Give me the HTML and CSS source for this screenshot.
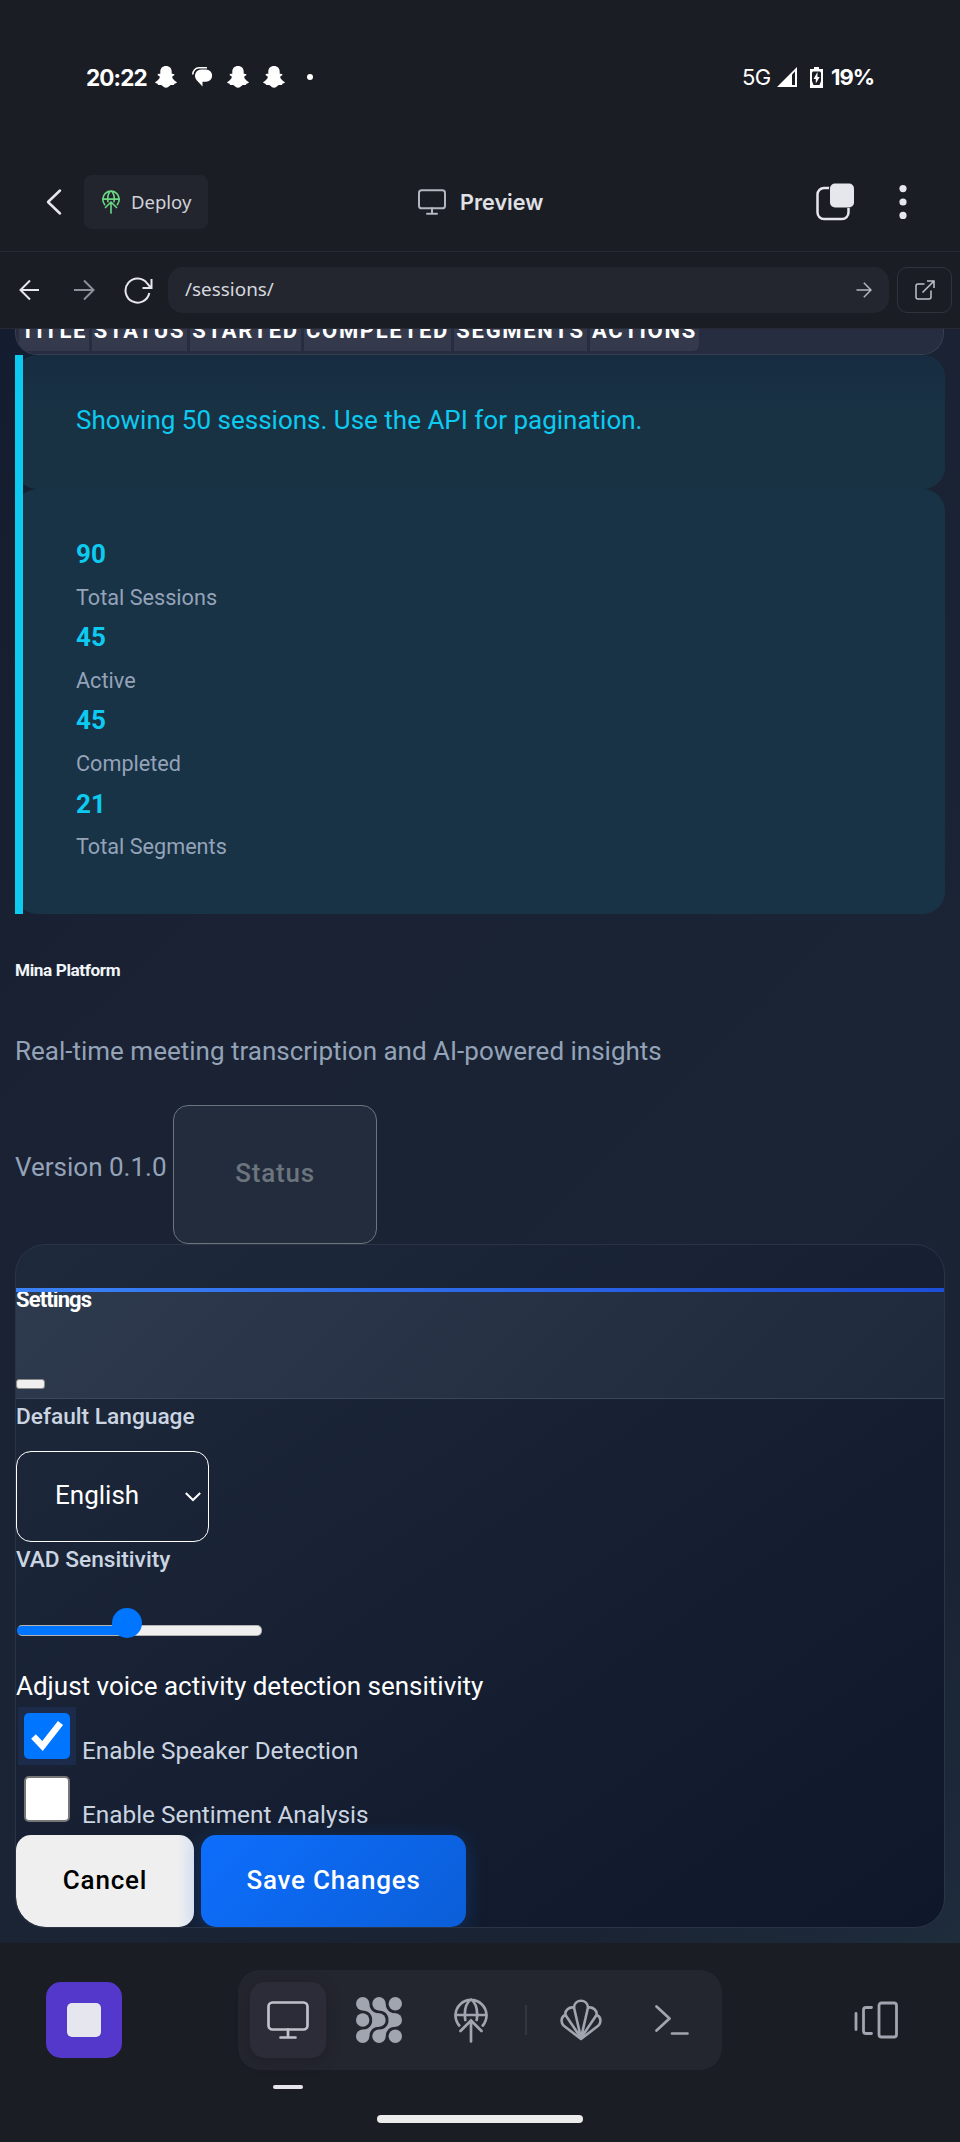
FILE: index.html
```html
<!DOCTYPE html>
<html lang="en">
<head>
<meta charset="utf-8">
<title>Preview</title>
<link rel="stylesheet" href="styles.css">
</head>
<body>
<svg width="0" height="0" class="defs">
  <defs>
    <symbol id="ghost" viewBox="0 0 22 22"><path d="M11 0C7.400 0 5.300 2.400 5.300 5.800v2C4.200 8 3 7.800 2.600 8.500c-.3.9 1.800 1.400 2.200 2.200.3 1.400-2.100 4-4.500 5.200-.8.700.7 1.600 2.200 1.900.5.300.2 1 .9 1.200 1.200.1 2.400-.4 3.600.4 1.200.9 2.300 2.300 4 2.300s2.800-1.400 4-2.300c1.200-.8 2.400-.3 3.600-.4.7-.2.4-.9.9-1.200 1.500-.3 3-1.200 2.200-1.900-2.400-1.200-4.800-3.800-4.500-5.200.4-.8 2.500-1.300 2.200-2.200-.4-.7-1.600-.5-2.700-.7v-2C16.700 2.400 14.600 0 11 0z" fill="#fff"/></symbol>
    <symbol id="monitor" viewBox="0 0 42 38"><g fill="none" stroke="currentColor" stroke-linecap="round"><rect x="1.500" y="1.500" width="39" height="27" rx="4"/><path d="M21 28.500V36M13.500 36.500h15"/></g></symbol>
    <symbol id="globe" viewBox="0 0 34 45"><g fill="none" stroke="currentColor" stroke-linecap="round"><path d="M5.200 27.500a15.500 15.500 0 1 1 23.600 0M1.500 17h31M11.300 22C10 13 12 5 17 1.500 22 5 24 13 22.700 22"/><path d="M17 43.500V23M6.500 33 17 22.500 27.500 33"/></g></symbol>
  </defs>
</svg>
<div class="screen">
  <div class="status-bar">
    <span class="clock">20:22</span>
    <svg class="ghost g1" width="22" height="22"><use href="#ghost"/></svg>
    <svg class="chat" width="20" height="20" viewBox="0 0 20 20"><path d="M9 2.500h5a6 6 0 0 1 0 12.300h-3.500V19.500L4.500 13A6 6 0 0 1 3 8.500 6 6 0 0 1 9 2.500z" fill="#fff"/><path d="M.8 7.500C.8 3.500 3.500.8 7 .8h8" fill="none" stroke="#fff" stroke-width="1.500"/></svg>
    <svg class="ghost" width="22" height="22"><use href="#ghost"/></svg>
    <svg class="ghost g3" width="22" height="22"><use href="#ghost"/></svg>
    <i class="dot"></i>
    <span class="net">5G</span>
    <svg class="signal" width="20" height="20" viewBox="0 0 20 20"><path d="M20 0v20H0z" fill="#fff"/><path d="M15 7.500l3-3V18h-3z" fill="#1b1d25"/></svg>
    <svg class="battery" width="13" height="21" viewBox="0 0 13 21"><path d="M4 0h5v2h4v19H0V2h4z" fill="#fff"/><path d="M3 4.500h7l1 1V14l-1.500 4h-6L2 14V5.500z" fill="#1b1d25"/><path d="M7.500 5 3.500 12h2.300v4.500L9.700 10H7.500z" fill="#fff"/></svg>
    <span class="pct">19%</span>
  </div>

  <header class="app-head">
    <svg class="back" width="18" height="28" viewBox="0 0 18 28"><path d="M15 2.500 3 14l12 11.500" fill="none" stroke="#e6e7ec" stroke-width="2.500" stroke-linecap="round" stroke-linejoin="round"/></svg>
    <div class="deploy"><svg class="deploy-icon" width="18" height="24"><use href="#globe"/></svg><span>Deploy</span></div>
    <div class="preview"><svg class="preview-icon" width="28" height="26"><use href="#monitor"/></svg><span>Preview</span></div>
    <svg class="tabs" width="38" height="38" viewBox="0 0 38 38"><rect x="1.500" y="5" width="31" height="31" rx="6.500" fill="none" stroke="#e6e7ec" stroke-width="2.500"/><rect x="13" y="0" width="25" height="25" rx="5.500" fill="#1b1d25"/><rect x="14" y="0.500" width="24" height="24" rx="5" fill="#e6e7ec"/></svg>
    <svg class="kebab" width="8" height="34" viewBox="0 0 8 34"><g fill="#e6e7ec"><circle cx="4" cy="3.600" r="3.600"/><circle cx="4" cy="17" r="3.600"/><circle cx="4" cy="30.400" r="3.600"/></g></svg>
  </header>

  <nav class="url-row">
    <svg class="nav-back" width="22" height="22" viewBox="0 0 22 22"><path d="M20 11H2M11 1.500 1.500 11l9.500 9.500" fill="none" stroke="#e6e7ec" stroke-width="2"/></svg>
    <svg class="nav-fwd" width="22" height="22" viewBox="0 0 22 22"><path d="M1 11h19M11 1.500 20.500 11 11 20.500" fill="none" stroke="#8d8f9a" stroke-width="2"/></svg>
    <svg class="reload" width="30" height="27" viewBox="0 0 30 27"><path d="M25.300 16a12 12 0 1 1-2.100-9.500L27 11M27.500 2v9H18.500" fill="none" stroke="#e6e7ec" stroke-width="2"/></svg>
    <div class="url"><span>/sessions/</span><svg width="16" height="16" viewBox="0 0 16 16"><path d="M.5 8H15M7.800.8 15 8l-7.200 7.200" fill="none" stroke="#b4b6bf" stroke-width="1.500"/></svg></div>
    <div class="open"><svg width="20" height="20" viewBox="0 0 20 20"><path d="M9.500 4H3Q1 4 1 6v11q0 2 2 2h11q2 0 2-2v-6.500M12 1h7v7M19 1 7.500 12.500" fill="none" stroke="#c0c2ca" stroke-width="1.500"/></svg></div>
  </nav>

  <main class="page">
    <div class="table-card">
      <span class="th t1">TITLE</span><span class="th t2">STATUS</span><span class="th t3">STARTED</span><span class="th t4">COMPLETED</span><span class="th t5">SEGMENTS</span><span class="th t6">ACTIONS</span>
    </div>
    <section class="alert a1"><p>Showing 50 sessions. Use the API for pagination.</p></section>
    <section class="alert a2">
      <p><b>90</b></p><p><small>Total Sessions</small></p>
      <p><b>45</b></p><p><small>Active</small></p>
      <p><b>45</b></p><p><small>Completed</small></p>
      <p><b>21</b></p><p><small>Total Segments</small></p>
    </section>
    <h5 class="brand">Mina Platform</h5>
    <p class="tagline">Real-time meeting transcription and AI-powered insights</p>
    <div class="version-row"><span class="version">Version 0.1.0</span><div class="status-btn"><span>Status</span></div></div>
    <section class="settings">
      <div class="settings-head"><h5>Settings</h5><i class="close"></i></div>
      <label class="field-label">Default Language</label>
      <div class="select"><span>English</span><svg width="16" height="10" viewBox="0 0 16 10"><path d="M.8 1 8 8l7.200-7" fill="none" stroke="#fff" stroke-width="2"/></svg></div>
      <label class="field-label vad">VAD Sensitivity</label>
      <div class="slider"><div class="track"><i class="thumb"></i></div></div>
      <p class="help">Adjust voice activity detection sensitivity</p>
      <div class="check"><span class="halo"><span class="box on"><svg width="46" height="46" viewBox="0 0 46 46"><path d="M9.500 23.500l9 9.500L36.500 10" fill="none" stroke="#fff" stroke-width="6.500"/></svg></span></span><span class="lbl">Enable Speaker Detection</span></div>
      <div class="check second"><span class="halo plain"><span class="box"></span></span><span class="lbl">Enable Sentiment Analysis</span></div>
      <div class="actions"><div class="btn cancel">Cancel</div><div class="btn save">Save Changes</div></div>
    </section>
  </main>

  <footer class="dock">
    <div class="stop"><i></i></div>
    <div class="pill">
      <div class="tab active"><svg class="heavy" width="42" height="38"><use href="#monitor"/></svg><i class="mark"></i></div>
      <div class="tab"><svg width="46" height="46" viewBox="0 0 46 46" fill="#a0a5b0"><circle cx="6.700" cy="6.700" r="6.700"/><circle cx="23" cy="6.700" r="6.700"/><circle cx="39.300" cy="6.700" r="6.700"/><circle cx="6.700" cy="23" r="6.700"/><circle cx="23" cy="23" r="6.700"/><circle cx="39.300" cy="23" r="6.700"/><circle cx="6.700" cy="39.300" r="6.700"/><circle cx="23" cy="39.300" r="6.700"/><circle cx="39.300" cy="39.300" r="6.700"/><path d="M13.400 6.700C13.400 12 17 16.300 23 16.300V29.700C17 29.700 13.400 34 13.400 39.300L6.700 32.600C12 32.600 16.300 29 16.300 23S12 13.400 6.700 13.400z"/><path d="M29.700 6.700C29.700 12 33.300 16.300 39.300 16.300V29.700C33.300 29.700 29.700 34 29.700 39.300L23 32.600C28.300 32.600 32.600 29 32.600 23S28.300 13.400 23 13.400z"/></svg></div>
      <div class="tab"><svg class="heavy" width="34" height="45"><use href="#globe"/></svg></div>
      <i class="sep"></i>
      <div class="tab"><svg width="42" height="42" viewBox="0 0 42 42"><g fill="none" stroke="#a0a5b0" stroke-width="2.600" stroke-linejoin="round"><path d="M21 40 3.500 26.500C.5 23 1 17.500 5.500 16 4.500 11.500 9 7.500 14 8.500c.5-9 13.500-9 14 0 5-1 9.500 3 8.500 7.500 4.500 1.500 5 7 2 10.500z"/><path d="M21 39 5.500 16M21 39 14 8.500M21 39l7-30.500M21 39l15.500-23"/></g></svg></div>
      <div class="tab"><svg width="34" height="30" viewBox="0 0 34 30"><path d="M1.500 1.500 14.500 13.500 1.500 25.500M17 28.500h15.500" fill="none" stroke="#a0a5b0" stroke-width="2.700" stroke-linecap="round" stroke-linejoin="round"/></svg></div>
    </div>
    <svg class="devices" width="44" height="38" viewBox="0 0 44 38"><g fill="none" stroke="#a0a5b0" stroke-width="2.800" stroke-linecap="round"><path d="M2 12.500v16M17.500 6.500H12q-2.500 0-2.500 2.500v21q0 2.500 2.500 2.500h5.500"/><rect x="25" y="2" width="17.500" height="34" rx="2.500"/></g></svg>
    <i class="home"></i>
  </footer>
</div>
</body>
</html>
```
FILE: styles.css
```css
* { box-sizing: border-box; }
body { margin: 0; background: #1b1d25; font-family: Roboto, sans-serif; color: #fff; }
p, h5 { margin: 0; }
svg { display: block; flex: none; }
i { display: block; flex: none; }
.defs { position: absolute; }
.screen { width: 960px; height: 2142px; overflow: hidden; display: flex; flex-direction: column; background: #1b1d25; }

/* Phone status bar */
.status-bar { height: 152px; padding: 2px 86px 0 86px; display: flex; align-items: center; font-family: Inter, sans-serif; }
.clock { font-size: 22.500px; font-weight: 700; width: 69px; letter-spacing: -0.900px; }
.chat { margin: 0 15px 0 15px; }
.g3 { margin-left: 14px; }
.dot { width: 6px; height: 6px; border-radius: 50%; background: #fff; margin-left: 22px; }
.net { font-size: 22px; margin-left: auto; width: 35px; letter-spacing: -0.600px; }
.signal { margin-right: 13px; }
.battery { margin-right: 8px; }
.pct { font-size: 22px; font-weight: 700; width: 43px; letter-spacing: -1px; white-space: nowrap; }

/* App header */
.app-head { height: 100px; border-bottom: 1px solid #272934; display: flex; align-items: center; padding: 0 53px 0 45px; font-family: "Noto Sans", sans-serif; }
.deploy { margin-left: 21px; width: 124px; height: 54px; border-radius: 8px; background: #23252e; display: flex; align-items: center; padding-left: 18px; gap: 11px; color: #d0d2da; font-size: 18.500px; }
.deploy-icon { color: #6cd983; stroke-width: 3px; }
.preview { margin-left: 210px; display: flex; align-items: center; gap: 14px; color: #e0e1e7; font-size: 21.600px; font-weight: 600; font-family: Inter, sans-serif; }
.preview-icon { color: #b4b6bf; stroke-width: 3px; }
.tabs { margin-left: auto; }
.kebab { margin-left: 45px; }

/* Address row */
.url-row { height: 77px; border-bottom: 1px solid #272934; display: flex; align-items: center; padding: 0 8px 0 19px; }
.nav-fwd { margin-left: 32px; }
.reload { margin-left: 29px; }
.url { margin-left: 14px; flex: 1; height: 46px; border-radius: 15px; background: #24262f; display: flex; align-items: center; justify-content: space-between; padding: 0 17px 2px; color: #d6d8df; font-family: "Noto Sans", sans-serif; font-size: 18.900px; }
.url svg { margin-top: 2px; }
.open { margin-left: 8px; width: 55px; height: 46px; border: 1px solid #30323d; border-radius: 10px; display: flex; align-items: center; justify-content: center; }

/* Web page */
.page { height: 1614px; padding: 0 15px; background: linear-gradient(135deg, #141d2f 0%, #1a2233 35%, #1a2435 60%, #1a2334 85%, #1e2c3c 100%); font-size: 26px; line-height: 41.600px; }
.table-card { height: 26px; width: 929px; border: 1px solid #363e50; border-top: 0; border-radius: 0 0 22px 22px; background: #262d40; padding-left: 3px; display: flex; gap: 3px; overflow: hidden; }
.th { height: 22px; display: flex; align-items: flex-end; justify-content: center; padding-bottom: 7.300px; line-height: 25.800px; font-size: 22px; font-weight: 700; letter-spacing: 1.700px; background: #343a4b; overflow: hidden; }
.t1 { width: 70px; border-bottom-left-radius: 8px; }
.t2 { width: 95px; }
.t3 { width: 111px; }
.t4 { width: 147px; }
.t5 { width: 133px; }
.t6 { width: 109px; border-bottom-right-radius: 6px; }
.alert { border-radius: 22px; background: #183246; position: relative; padding: 45px 61px 0; color: #0dcaf0; }
.alert::before { content: ""; position: absolute; left: 0; top: 0; bottom: 0; width: 8px; background: #0dcaf0; }
.a1 { height: 134px; background: linear-gradient(180deg, #172c40, #183244 40%); }
.a2 { height: 425px; }
.a2 p { height: 41.600px; }
.a2 small { font-size: 21.650px; color: #94a3b8; }
.brand { margin-top: 43px; font-size: 17.200px; line-height: 26px; letter-spacing: -0.400px; color: #f1f5f9; }
.tagline { margin-top: 48px; color: #94a3b8; }
.version-row { margin-top: 32.500px; display: flex; color: #94a3b8; }
.version { margin-top: 41.500px; width: 158px; white-space: nowrap; }
.status-btn { width: 204px; height: 139px; border: 1px solid #6c757d; border-radius: 15px; background: #222c3d; color: #6c757d; font-weight: 500; letter-spacing: 0.800px; display: flex; align-items: center; justify-content: center; padding-bottom: 1px; }

/* Settings card */
.settings { height: 684px; border: 1px solid #2a3445; border-radius: 30px; background: linear-gradient(145deg, #1e293b 0%, #0f172a 100%); padding-top: 43px; overflow: hidden; }
.settings-head { position: relative; height: 111px; border-bottom: 1px solid #3a4659; background: linear-gradient(135deg, #2e3a4e, #1e293b); padding-top: 2px; }
.settings-head::before { content: ""; position: absolute; left: 0; right: 0; top: 0; height: 4px; background: linear-gradient(90deg, #3b82f6, #1d4ed8); }
.settings-head h5 { font-size: 22px; line-height: 20px; letter-spacing: -0.900px; }
.close { margin-top: 69px; width: 29px; height: 10px; border-radius: 3px; background: #efefef; border: 1px solid #8b8b85; }
.field-label { display: block; font-size: 22.700px; line-height: 30px; font-weight: 500; color: #cbd5e1; margin-top: 3px; }
.select { margin-top: 19px; width: 193px; height: 91px; border: 1px solid #fff; border-radius: 15px; display: flex; align-items: center; justify-content: space-between; padding: 0 7px 1px 38px; }
.select svg { margin-top: 2px; }
.slider { padding: 50px 0 0 1px; height: 91px; }
.track { position: relative; width: 245px; height: 11px; border-radius: 5px; border: 1px solid #b2b2b2; background: linear-gradient(90deg, #0075ff 45%, #efefef 45%) border-box; border-left-color: #0075ff; }
.thumb { position: absolute; left: 94px; top: -18px; width: 30px; height: 30px; border-radius: 50%; background: #0075ff; }
.help { height: 41px; }
.check { display: flex; height: 64px; padding-left: 2px; }
.halo { width: 58px; height: 58px; padding: 6px; background: #1b2b49; }
.plain { background: none; }
.second .box { margin-top: -1px; }
.box { display: block; width: 46px; height: 46px; border-radius: 5px; background: #fff; border: 2px solid #767676; }
.on { background: #0075ff; border: 0; }
.lbl { margin: 23px 0 0 6px; font-size: 24.350px; color: #cbd5e1; white-space: nowrap; }
.actions { display: flex; gap: 7px; }
.btn { height: 92px; border-radius: 15px; font-weight: 500; letter-spacing: 0.800px; display: flex; align-items: center; justify-content: center; }
.cancel { width: 178px; background: linear-gradient(90deg, #efefef 90%, #dfe6f1); color: #000; border-bottom-left-radius: 30px; }
.save { width: 265px; background: linear-gradient(135deg, #0d6efd, #0b5ed7); box-shadow: 0 4px 20px rgba(13, 110, 253, 0.250); }

/* Bottom dock */
.dock { position: relative; height: 199px; display: flex; align-items: flex-start; padding: 27px 62px 0 46px; }
.stop { margin-top: 12px; width: 76px; height: 76px; border-radius: 15px; background: #5338cb; display: flex; align-items: center; justify-content: center; }
.stop i { width: 34px; height: 34px; border-radius: 5px; background: #e6e7ee; }
.pill { margin-left: 116px; height: 100px; padding: 12px; border-radius: 22px; background: #24262f; display: flex; gap: 16px; align-items: center; }
.tab { position: relative; width: 75.600px; height: 76px; border-radius: 15px; display: flex; align-items: center; justify-content: center; color: #a0a5b0; }
.active { background: #2b2c38; color: #c0c2ca; box-shadow: 0 3px 14px rgba(20, 20, 28, 0.350); }
.heavy { stroke-width: 2.700px; }
.mark { position: absolute; left: 23px; bottom: -31px; width: 30px; height: 4px; border-radius: 2px; background: #e8e4ee; }
.sep { width: 2px; height: 30px; background: #33353f; }
.devices { margin: 31px 0 0 auto; }
.home { position: absolute; left: 377px; top: 172px; width: 206px; height: 8px; border-radius: 4px; background: #ececec; }
```
